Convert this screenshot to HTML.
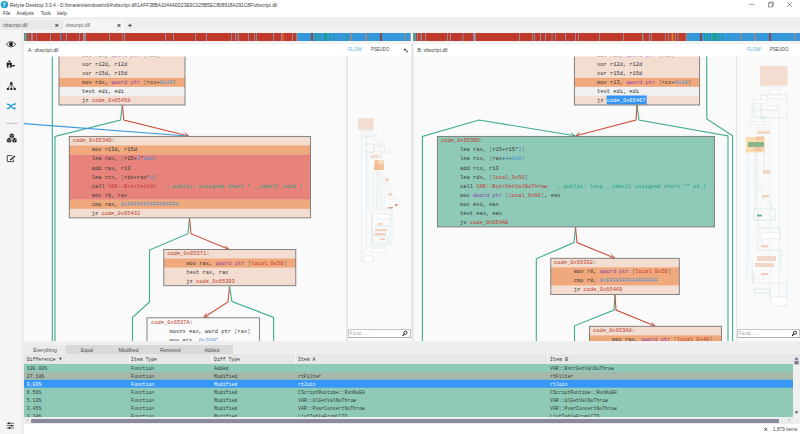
<!DOCTYPE html>
<html><head><meta charset="utf-8">
<style>
*{margin:0;padding:0;box-sizing:border-box}
html,body{width:800px;height:434px;overflow:hidden;background:#f0f0f0;font-family:'Liberation Sans', sans-serif}
.abs{position:absolute}
</style></head><body>
<div class="abs" style="left:0;top:0;width:800px;height:16.8px;background:#fff"></div>
<div class="abs" style="left:0;top:16.8px;width:800px;height:14.2px;background:#efefef"></div>
<div class="abs" style="left:0;top:20px;width:62.5px;height:9.8px;background:#e9e9e9"></div>
<div class="abs" style="left:63.3px;top:20px;width:62px;height:9.8px;background:#f4f4f4"></div>
<div class="abs" style="left:0;top:29.8px;width:800px;height:1.5px;background:#f4f4f4"></div>
<div class="abs" style="left:0;top:31.3px;width:23.8px;height:403px;background:linear-gradient(to right,#f5f5f5 0,#f5f5f5 19.5px,#ececec 22.8px,#e9e9e9 23.8px)"></div>
<div class="abs" style="left:23.5px;top:31.3px;width:776.5px;height:12.5px;background:#f3f3f3"></div>
<!-- panels -->
<div class="abs" style="left:24px;top:43.9px;width:387px;height:11.9px;background:#fff"></div>
<div class="abs" style="left:413.5px;top:43.9px;width:386.5px;height:11.9px;background:#fff"></div>
<div class="abs" style="left:24px;top:55.8px;width:387px;height:285.2px;background:#fafafa"></div>
<div class="abs" style="left:413.5px;top:55.8px;width:386.5px;height:285.2px;background:#fafafa"></div>
<div class="abs" style="left:346.2px;top:55.5px;width:1.8px;height:285.5px;background:#e6e6e6"></div>
<div class="abs" style="left:735.6px;top:55.5px;width:1.8px;height:285.5px;background:#e6e6e6"></div>
<div class="abs" style="left:411px;top:43.9px;width:2.5px;height:297px;background:#ececec"></div>
<div class="abs" style="left:411.6px;top:43.9px;width:1.2px;height:297px;background:#e4e4e4"></div>
<svg width="800" height="434" style="position:absolute;left:0;top:0"><defs><clipPath id="cma"><rect x="348.5" y="55" width="62.5" height="286"/></clipPath><clipPath id="cmb"><rect x="737.5" y="55" width="62.5" height="286"/></clipPath></defs><g clip-path="url(#cma)"><rect x="357.8" y="118.3" width="15.7" height="11.3" fill="#f2ddd0"/><polyline points="361.5,134 361.5,253 364,253" fill="none" stroke="#d0e4ee" stroke-width="0.45" stroke-linejoin="miter"/><polyline points="366.5,136 366.5,250" fill="none" stroke="#d0e4ee" stroke-width="0.45" stroke-linejoin="miter"/><polyline points="361.5,135 378,135 378,139" fill="none" stroke="#d0e4ee" stroke-width="0.45" stroke-linejoin="miter"/><polyline points="372,140 383,140 383,146" fill="none" stroke="#d0e4ee" stroke-width="0.45" stroke-linejoin="miter"/><polyline points="374,146 385,146 385,150" fill="none" stroke="#d0e4ee" stroke-width="0.45" stroke-linejoin="miter"/><polyline points="368,150 368,212" fill="none" stroke="#d0e4ee" stroke-width="0.45" stroke-linejoin="miter"/><polyline points="373,170 373,208 393,208" fill="none" stroke="#d0e4ee" stroke-width="0.45" stroke-linejoin="miter"/><polyline points="376.5,171 376.5,208" fill="none" stroke="#d0e4ee" stroke-width="0.45" stroke-linejoin="miter"/><polyline points="379,171 379,205" fill="none" stroke="#d0e4ee" stroke-width="0.45" stroke-linejoin="miter"/><polyline points="382,176 382,206" fill="none" stroke="#d0e4ee" stroke-width="0.45" stroke-linejoin="miter"/><polyline points="385,190 385,204" fill="none" stroke="#d0e4ee" stroke-width="0.45" stroke-linejoin="miter"/><polyline points="372,210 392,210 392,245 372,245 372,210" fill="none" stroke="#d0e4ee" stroke-width="0.45" stroke-linejoin="miter"/><polyline points="390,213 390,243" fill="none" stroke="#d0e4ee" stroke-width="0.45" stroke-linejoin="miter"/><polyline points="369,246 385,246 385,252" fill="none" stroke="#d0e4ee" stroke-width="0.45" stroke-linejoin="miter"/><polyline points="361,253 361,262 364,262" fill="none" stroke="#d0e4ee" stroke-width="0.45" stroke-linejoin="miter"/><polyline points="362,137 375,137" fill="none" stroke="#b9ddd3" stroke-width="0.45" stroke-linejoin="miter"/><polyline points="364,144 374,144 374,152 364,152" fill="none" stroke="#b9ddd3" stroke-width="0.45" stroke-linejoin="miter"/><polyline points="370,153 381,153 381,158 370,158" fill="none" stroke="#b9ddd3" stroke-width="0.45" stroke-linejoin="miter"/><polyline points="372,215 372,244" fill="none" stroke="#b9ddd3" stroke-width="0.45" stroke-linejoin="miter"/><polyline points="375,226 389,226" fill="none" stroke="#b9ddd3" stroke-width="0.45" stroke-linejoin="miter"/><polyline points="374,236 388,236 388,243 374,243" fill="none" stroke="#b9ddd3" stroke-width="0.45" stroke-linejoin="miter"/><rect x="361" y="130.5" width="5" height="1.8" fill="#ffffff" stroke="#dcdcdc" stroke-width="0.45"/><rect x="367" y="130.5" width="4" height="1.8" fill="#ffffff" stroke="#dcdcdc" stroke-width="0.45"/><rect x="376" y="143" width="5" height="2" fill="#ffffff" stroke="#dcdcdc" stroke-width="0.45"/><rect x="379" y="148" width="6" height="3" fill="#ffffff" stroke="#dcdcdc" stroke-width="0.45"/><rect x="385" y="150" width="5" height="3" fill="#ffffff" stroke="#dcdcdc" stroke-width="0.45"/><rect x="373" y="152" width="8" height="2.5" fill="#ffffff" stroke="#dcdcdc" stroke-width="0.45"/><rect x="376" y="172" width="6" height="2" fill="#ffffff" stroke="#dcdcdc" stroke-width="0.45"/><rect x="380" y="176" width="6" height="2" fill="#ffffff" stroke="#dcdcdc" stroke-width="0.45"/><rect x="384" y="183" width="5" height="2.5" fill="#ffffff" stroke="#dcdcdc" stroke-width="0.45"/><rect x="387" y="188" width="5" height="2" fill="#ffffff" stroke="#dcdcdc" stroke-width="0.45"/><rect x="389" y="197" width="6" height="2.5" fill="#ffffff" stroke="#dcdcdc" stroke-width="0.45"/><rect x="377" y="214" width="13" height="5" fill="#ffffff" stroke="#dcdcdc" stroke-width="0.45"/><rect x="373" y="248" width="8" height="4.5" fill="#ffffff" stroke="#dcdcdc" stroke-width="0.45"/><rect x="364" y="256" width="9" height="6" fill="#ffffff" stroke="#dcdcdc" stroke-width="0.45"/><rect x="374.5" y="160" width="9.5" height="10" fill="#f5c29e"/><rect x="378" y="160" width="6" height="4" fill="#f8dcb8"/><rect x="374.5" y="166" width="4" height="4" fill="#f0b48a"/><rect x="370.5" y="155.5" width="8" height="2" fill="#f2d6c4"/><rect x="385" y="178" width="4" height="3" fill="#f2d3c0"/><rect x="388" y="193" width="4" height="2.5" fill="#f2d3c0"/><rect x="395" y="204" width="2.5" height="2" fill="#e88a7a"/><rect x="388" y="207" width="5" height="1.5" fill="#e8a090"/><rect x="378" y="223" width="5" height="2" fill="#f2d3c0"/><rect x="375" y="229" width="12" height="2.2" fill="#f2d3c0"/><rect x="374" y="233" width="12" height="2.2" fill="#f2d3c0"/><rect x="380" y="238" width="5" height="2" fill="#f2d3c0"/><rect x="378" y="205" width="4" height="3" fill="#ffffff" stroke="#dcdcdc" stroke-width="0.45"/></g><g clip-path="url(#cmb)"><rect x="759.9" y="66" width="27.7" height="19.7" fill="#f2ddd0"/><polyline points="779,89 779,300" fill="none" stroke="#d0e4ee" stroke-width="0.45" stroke-linejoin="miter"/><polyline points="787.5,95 787.5,297" fill="none" stroke="#d0e4ee" stroke-width="0.45" stroke-linejoin="miter"/><polyline points="770,89 770,95" fill="none" stroke="#d0e4ee" stroke-width="0.45" stroke-linejoin="miter"/><polyline points="746.5,137 746.5,278 757,278" fill="none" stroke="#d0e4ee" stroke-width="0.45" stroke-linejoin="miter"/><polyline points="749,152 749,272" fill="none" stroke="#d0e4ee" stroke-width="0.45" stroke-linejoin="miter"/><polyline points="752,100 752,125" fill="none" stroke="#d0e4ee" stroke-width="0.45" stroke-linejoin="miter"/><polyline points="755,152 755,210" fill="none" stroke="#d0e4ee" stroke-width="0.45" stroke-linejoin="miter"/><polyline points="758,210 758,250" fill="none" stroke="#d0e4ee" stroke-width="0.45" stroke-linejoin="miter"/><polyline points="770,120 770,300" fill="none" stroke="#d0e4ee" stroke-width="0.45" stroke-linejoin="miter"/><polyline points="752,260 752,283 786,283 786,297" fill="none" stroke="#d0e4ee" stroke-width="0.45" stroke-linejoin="miter"/><polyline points="763,115 763,137" fill="none" stroke="#d0e4ee" stroke-width="0.45" stroke-linejoin="miter"/><polyline points="761,95 787,95" fill="none" stroke="#b9ddd3" stroke-width="0.45" stroke-linejoin="miter"/><polyline points="761,95 761,118 787,118" fill="none" stroke="#b9ddd3" stroke-width="0.45" stroke-linejoin="miter"/><polyline points="754,103 754,117 767,117" fill="none" stroke="#b9ddd3" stroke-width="0.45" stroke-linejoin="miter"/><polyline points="756,110 777,110" fill="none" stroke="#b9ddd3" stroke-width="0.45" stroke-linejoin="miter"/><polyline points="754,209 775,209 775,220 754,220 754,209" fill="none" stroke="#b9ddd3" stroke-width="0.45" stroke-linejoin="miter"/><polyline points="758,228 780,228 780,240" fill="none" stroke="#b9ddd3" stroke-width="0.45" stroke-linejoin="miter"/><polyline points="756,250 781,250 781,270" fill="none" stroke="#b9ddd3" stroke-width="0.45" stroke-linejoin="miter"/><polyline points="753,270 753,283" fill="none" stroke="#b9ddd3" stroke-width="0.45" stroke-linejoin="miter"/><polyline points="754,289 770,289 770,293 754,293 754,289" fill="none" stroke="#b9ddd3" stroke-width="0.45" stroke-linejoin="miter"/><polyline points="762,198 772,204 772,209" fill="none" stroke="#b9ddd3" stroke-width="0.45" stroke-linejoin="miter"/><polyline points="757,150 757,205" fill="none" stroke="#b9ddd3" stroke-width="0.45" stroke-linejoin="miter"/><polyline points="764,152 764,170" fill="none" stroke="#b9ddd3" stroke-width="0.45" stroke-linejoin="miter"/><rect x="766" y="87" width="8" height="2.5" fill="#ffffff" stroke="#dcdcdc" stroke-width="0.45"/><rect x="776" y="87" width="4" height="2.5" fill="#ffffff" stroke="#dcdcdc" stroke-width="0.45"/><rect x="767.5" y="95" width="20" height="3.5" fill="#ffffff" stroke="#dcdcdc" stroke-width="0.45"/><rect x="754" y="100" width="13" height="3.5" fill="#ffffff" stroke="#dcdcdc" stroke-width="0.45"/><rect x="768" y="106" width="9" height="4" fill="#ffffff" stroke="#dcdcdc" stroke-width="0.45"/><rect x="748" y="122" width="18" height="2.5" fill="#ffffff" stroke="#dcdcdc" stroke-width="0.45"/><rect x="758" y="127.5" width="8" height="2" fill="#ffffff" stroke="#dcdcdc" stroke-width="0.45"/><rect x="751" y="160" width="7" height="2" fill="#ffffff" stroke="#dcdcdc" stroke-width="0.45"/><rect x="756" y="166" width="6" height="2" fill="#ffffff" stroke="#dcdcdc" stroke-width="0.45"/><rect x="753" y="178" width="6" height="2" fill="#ffffff" stroke="#dcdcdc" stroke-width="0.45"/><rect x="757" y="186" width="7" height="2" fill="#ffffff" stroke="#dcdcdc" stroke-width="0.45"/><rect x="761" y="233" width="19" height="5.5" fill="#ffffff" stroke="#dcdcdc" stroke-width="0.45"/><rect x="757" y="240" width="5" height="2" fill="#ffffff" stroke="#dcdcdc" stroke-width="0.45"/><rect x="754" y="276" width="10" height="3" fill="#ffffff" stroke="#dcdcdc" stroke-width="0.45"/><rect x="771" y="297" width="16" height="9" fill="#ffffff" stroke="#dcdcdc" stroke-width="0.45"/><rect x="757" y="131" width="13" height="3" fill="#f2d6c6"/><rect x="746" y="137" width="18.7" height="15.5" fill="#f8dcb2"/><rect x="756" y="136.5" width="8" height="3.5" fill="#f3c6a4"/><rect x="748" y="142" width="16" height="5" fill="#8db58a"/><rect x="754" y="147.5" width="8" height="3.5" fill="#f3c6a4"/><rect x="763" y="170" width="7" height="4" fill="#f2d6c6"/><rect x="762" y="195" width="7" height="2.5" fill="#f2d0bc"/><rect x="757" y="214.5" width="5" height="2" fill="#5fb896"/><rect x="761" y="245" width="7" height="2.5" fill="#f2d0bc"/><rect x="757" y="256" width="19" height="5" fill="#f2d6c6"/><rect x="755" y="263" width="19" height="4" fill="#f2d6c6"/><rect x="761" y="273" width="7" height="2" fill="#f2c8b4"/></g></svg>

<svg width="800" height="434" style="position:absolute;left:0;top:0" font-family="'Liberation Mono', monospace" font-size="5.4">
<defs>
<clipPath id="ca"><rect x="24" y="56.4" width="322.5" height="284.6"/></clipPath>
<clipPath id="cb"><rect x="413.5" y="56.4" width="322" height="284.6"/></clipPath>
</defs>
<g clip-path="url(#ca)"><polyline points="52.3,55 52.3,341" fill="none" stroke="#3fab8f" stroke-width="1.1" stroke-linejoin="miter"/><polyline points="122.4,105 120.5,120 55,136.4 55,341" fill="none" stroke="#3fab8f" stroke-width="1.1" stroke-linejoin="miter"/><polyline points="122.4,105 123.8,120 188.5,136" fill="none" stroke="#c9503f" stroke-width="1.1" stroke-linejoin="miter"/><polyline points="183.60,137.06 188.5,136 184.66,132.78" fill="none" stroke="#c9503f" stroke-width="1"/><polyline points="24,123.6 187,136" fill="none" stroke="#3a9ad9" stroke-width="1.1" stroke-linejoin="miter"/><polyline points="189.5,218 188,233.7 149.5,250 149.5,302 132.5,317.5 132.5,341" fill="none" stroke="#3fab8f" stroke-width="1.1" stroke-linejoin="miter"/><polyline points="189.5,218 191,233.7 228.7,249.3" fill="none" stroke="#c9503f" stroke-width="1.1" stroke-linejoin="miter"/><polyline points="223.70,249.61 228.7,249.3 225.38,245.55" fill="none" stroke="#c9503f" stroke-width="1"/><polyline points="229.5,286 228,302 203.8,317.5" fill="none" stroke="#c9503f" stroke-width="1.1" stroke-linejoin="miter"/><polyline points="206.40,313.22 203.8,317.5 208.78,316.93" fill="none" stroke="#c9503f" stroke-width="1"/><polyline points="229.5,286 232,301.5 273.6,317.4 273.6,341" fill="none" stroke="#3fab8f" stroke-width="1.1" stroke-linejoin="miter"/><rect x="59" y="50.699999999999996" width="126" height="54.300000000000004" fill="#f2ddd0"/>
<rect x="59" y="77.85" width="126" height="9.05" fill="#f0a97c"/>
<rect x="59" y="86.90" width="126" height="9.05" fill="#f0f0f0"/>
<text x="82" y="56.65" xml:space="preserve"><tspan fill="#363636">mov rax, </tspan><tspan fill="#8e44ad">qword ptr</tspan><tspan fill="#363636"> </tspan><tspan fill="#7a7a7a">[</tspan><tspan fill="#363636">rax</tspan><tspan fill="#7a7a7a">]</tspan></text>
<text x="82" y="65.70" xml:space="preserve"><tspan fill="#363636">xor r12d, r12d</tspan></text>
<text x="82" y="74.75" xml:space="preserve"><tspan fill="#363636">xor r15d, r15d</tspan></text>
<text x="82" y="83.80" xml:space="preserve"><tspan fill="#363636">mov rdx, </tspan><tspan fill="#8e44ad">qword ptr</tspan><tspan fill="#363636"> </tspan><tspan fill="#7a7a7a">[</tspan><tspan fill="#363636">rcx+</tspan><tspan fill="#3d8fd6">0x10</tspan><tspan fill="#7a7a7a">]</tspan></text>
<text x="82" y="92.85" xml:space="preserve"><tspan fill="#363636">test edi, edi</tspan></text>
<text x="82" y="101.90" xml:space="preserve"><tspan fill="#363636">jz </tspan><tspan fill="#c0392b">code_0x65458</tspan></text>
<rect x="59" y="50.699999999999996" width="126" height="54.300000000000004" fill="none" stroke="#777777" stroke-width="0.9"/><rect x="69.3" y="136.4" width="241.2" height="81.45" fill="#f2ddd0"/>
<rect x="69.3" y="145.45" width="241.2" height="9.05" fill="#f0a97c"/>
<rect x="69.3" y="154.50" width="241.2" height="45.25" fill="#e8837c"/>
<rect x="69.3" y="199.75" width="241.2" height="9.05" fill="#f0a97c"/>
<text x="72.8" y="142.35" xml:space="preserve"><tspan fill="#c0392b">code_0x6534D</tspan><tspan fill="#363636">:</tspan></text>
<text x="91.69999999999999" y="151.40" xml:space="preserve"><tspan fill="#363636">mov r13d, r15d</tspan></text>
<text x="91.69999999999999" y="160.45" xml:space="preserve"><tspan fill="#363636">lea rax, </tspan><tspan fill="#7a7a7a">[</tspan><tspan fill="#363636">r15+</tspan><tspan fill="#3d8fd6">2</tspan><tspan fill="#363636">*</tspan><tspan fill="#3d8fd6">0x8</tspan><tspan fill="#7a7a7a">]</tspan></text>
<text x="91.69999999999999" y="169.50" xml:space="preserve"><tspan fill="#363636">add rax, r13</tspan></text>
<text x="91.69999999999999" y="178.55" xml:space="preserve"><tspan fill="#363636">lea rcx, </tspan><tspan fill="#7a7a7a">[</tspan><tspan fill="#363636">rdx+rax*</tspan><tspan fill="#3d8fd6">8</tspan><tspan fill="#7a7a7a">]</tspan></text>
<text x="91.69999999999999" y="187.60" xml:space="preserve"><tspan fill="#363636">call </tspan><tspan fill="#c0392b">VAR::BstrGetVal</tspan><tspan fill="#363636">   </tspan><tspan fill="#16a085">; public: unsigned short * __cdecl( void )</tspan></text>
<text x="91.69999999999999" y="196.65" xml:space="preserve"><tspan fill="#363636">mov r8, rax</tspan></text>
<text x="91.69999999999999" y="205.70" xml:space="preserve"><tspan fill="#363636">cmp rax, </tspan><tspan fill="#3d8fd6">0xFFFFFFFFFFFFFFFF</tspan></text>
<text x="91.69999999999999" y="214.75" xml:space="preserve"><tspan fill="#363636">jz </tspan><tspan fill="#c0392b">code_0x65432</tspan></text>
<rect x="69.3" y="136.4" width="241.2" height="81.45" fill="none" stroke="#777777" stroke-width="0.9"/><rect x="163.8" y="249.5" width="132" height="36.2" fill="#f2ddd0"/>
<rect x="163.8" y="258.55" width="132" height="9.05" fill="#f0a97c"/>
<text x="167.3" y="255.45" xml:space="preserve"><tspan fill="#c0392b">code_0x65371</tspan><tspan fill="#363636">:</tspan></text>
<text x="186.3" y="264.50" xml:space="preserve"><tspan fill="#363636">mov rax, </tspan><tspan fill="#8e44ad">qword ptr</tspan><tspan fill="#363636"> </tspan><tspan fill="#7a7a7a">[</tspan><tspan fill="#c0392b">local_0x50</tspan><tspan fill="#7a7a7a">]</tspan></text>
<text x="186.3" y="273.55" xml:space="preserve"><tspan fill="#363636">test rax, rax</tspan></text>
<text x="186.3" y="282.60" xml:space="preserve"><tspan fill="#363636">jz </tspan><tspan fill="#c0392b">code_0x65393</tspan></text>
<rect x="163.8" y="249.5" width="132" height="36.2" fill="none" stroke="#777777" stroke-width="0.9"/><rect x="147" y="317.8" width="112.4" height="36.2" fill="#fafafa"/>
<text x="151" y="323.75" xml:space="preserve"><tspan fill="#c0392b">code_0x6537A</tspan><tspan fill="#363636">:</tspan></text>
<text x="169.5" y="332.80" xml:space="preserve"><tspan fill="#363636">movzx eax, word ptr </tspan><tspan fill="#7a7a7a">[</tspan><tspan fill="#363636">rax</tspan><tspan fill="#7a7a7a">]</tspan></text>
<text x="169.5" y="341.85" xml:space="preserve"><tspan fill="#363636">mov ecx, </tspan><tspan fill="#3d8fd6">0x200C</tspan></text>
<text x="169.5" y="350.90" xml:space="preserve"></text>
<rect x="147" y="317.8" width="112.4" height="36.2" fill="none" stroke="#777777" stroke-width="0.9"/></g>
<g clip-path="url(#cb)"><polyline points="706.8,55 706.8,119 732.6,135.7 732.6,341" fill="none" stroke="#3fab8f" stroke-width="1.1" stroke-linejoin="miter"/><polyline points="637,105 639,120 728,136 728,341" fill="none" stroke="#3fab8f" stroke-width="1.1" stroke-linejoin="miter"/><polyline points="637,105 636,120 575.8,135.8" fill="none" stroke="#c9503f" stroke-width="1.1" stroke-linejoin="miter"/><polyline points="579.59,132.53 575.8,135.8 580.71,136.79" fill="none" stroke="#c9503f" stroke-width="1"/><polyline points="422.4,341 422.4,136.4 479,120 575.1,135.8" fill="none" stroke="#3fab8f" stroke-width="1.1" stroke-linejoin="miter"/><polyline points="570.30,137.24 575.1,135.8 571.02,132.90" fill="none" stroke="#3fab8f" stroke-width="1"/><polyline points="575.5,227 574,242.5 536.3,258.8 536.3,341" fill="none" stroke="#3fab8f" stroke-width="1.1" stroke-linejoin="miter"/><polyline points="575.5,227 577,242.5 614.5,258" fill="none" stroke="#c9503f" stroke-width="1.1" stroke-linejoin="miter"/><polyline points="609.50,258.31 614.5,258 611.18,254.25" fill="none" stroke="#c9503f" stroke-width="1"/><polyline points="615,294.5 614,310 574.5,325.8 574.5,341" fill="none" stroke="#3fab8f" stroke-width="1.1" stroke-linejoin="miter"/><polyline points="615,294.5 616,310 655,326" fill="none" stroke="#c9503f" stroke-width="1.1" stroke-linejoin="miter"/><polyline points="650.00,326.33 655,326 651.67,322.26" fill="none" stroke="#c9503f" stroke-width="1"/><rect x="574.4" y="50.699999999999996" width="125.2" height="54.300000000000004" fill="#f2ddd0"/>
<rect x="574.4" y="77.85" width="125.2" height="9.05" fill="#f0a97c"/>
<rect x="574.4" y="86.90" width="125.2" height="9.05" fill="#f0f0f0"/>
<text x="597.0" y="56.65" xml:space="preserve"><tspan fill="#363636">mov rax, </tspan><tspan fill="#8e44ad">qword ptr</tspan><tspan fill="#363636"> </tspan><tspan fill="#7a7a7a">[</tspan><tspan fill="#363636">rax</tspan><tspan fill="#7a7a7a">]</tspan></text>
<text x="597.0" y="65.70" xml:space="preserve"><tspan fill="#363636">xor r12d, r12d</tspan></text>
<text x="597.0" y="74.75" xml:space="preserve"><tspan fill="#363636">xor r15d, r15d</tspan></text>
<text x="597.0" y="83.80" xml:space="preserve"><tspan fill="#363636">mov r13, </tspan><tspan fill="#8e44ad">qword ptr</tspan><tspan fill="#363636"> </tspan><tspan fill="#7a7a7a">[</tspan><tspan fill="#363636">rcx+</tspan><tspan fill="#3d8fd6">0x10</tspan><tspan fill="#7a7a7a">]</tspan></text>
<text x="597.0" y="92.85" xml:space="preserve"><tspan fill="#363636">test edi, edi</tspan></text>
<rect x="606.6" y="95.5" width="40" height="9" fill="#3393f3"/><text x="597.0" y="102.25" xml:space="preserve"><tspan fill="#363636">jz </tspan><tspan fill="#ffffff">code_0x65467</tspan></text>
<rect x="574.4" y="50.699999999999996" width="125.2" height="54.300000000000004" fill="none" stroke="#777777" stroke-width="0.9"/><rect x="437.4" y="136.4" width="277" height="90.5" fill="#8fcab9"/>
<text x="441.0" y="142.35" xml:space="preserve"><tspan fill="#c0392b">code_0x6536D</tspan><tspan fill="#363636">:</tspan></text>
<text x="460.0" y="151.40" xml:space="preserve"><tspan fill="#363636">lea rax, </tspan><tspan fill="#7a7a7a">[</tspan><tspan fill="#363636">r15+r15*</tspan><tspan fill="#3d8fd6">2</tspan><tspan fill="#7a7a7a">]</tspan></text>
<text x="460.0" y="160.45" xml:space="preserve"><tspan fill="#363636">lea rcx, </tspan><tspan fill="#7a7a7a">[</tspan><tspan fill="#363636">rax+</tspan><tspan fill="#3d8fd6">8</tspan><tspan fill="#363636">+</tspan><tspan fill="#3d8fd6">0x8</tspan><tspan fill="#7a7a7a">]</tspan></text>
<text x="460.0" y="169.50" xml:space="preserve"><tspan fill="#363636">add rcx, r13</tspan></text>
<text x="460.0" y="178.55" xml:space="preserve"><tspan fill="#363636">lea rdx, </tspan><tspan fill="#7a7a7a">[</tspan><tspan fill="#c0392b">local_0x50</tspan><tspan fill="#7a7a7a">]</tspan></text>
<text x="460.0" y="187.60" xml:space="preserve"><tspan fill="#363636">call </tspan><tspan fill="#c0392b">VAR::BstrGetValNoThrow</tspan><tspan fill="#363636">   </tspan><tspan fill="#16a085">; public: long __cdecl( unsigned short ** p1 )</tspan></text>
<text x="460.0" y="196.65" xml:space="preserve"><tspan fill="#363636">mov </tspan><tspan fill="#8e44ad">dword ptr</tspan><tspan fill="#363636"> </tspan><tspan fill="#7a7a7a">[</tspan><tspan fill="#c0392b">local_0x60</tspan><tspan fill="#7a7a7a">]</tspan><tspan fill="#363636">, eax</tspan></text>
<text x="460.0" y="205.70" xml:space="preserve"><tspan fill="#363636">mov esi, eax</tspan></text>
<text x="460.0" y="214.75" xml:space="preserve"><tspan fill="#363636">test eax, eax</tspan></text>
<text x="460.0" y="223.80" xml:space="preserve"><tspan fill="#363636">js </tspan><tspan fill="#c0392b">code_0x654AE</tspan></text>
<rect x="437.4" y="136.4" width="277" height="90.5" fill="none" stroke="#777777" stroke-width="0.9"/><rect x="550.8" y="258.3" width="128.5" height="36.2" fill="#f2ddd0"/>
<rect x="550.8" y="267.35" width="128.5" height="18.10" fill="#f0a97c"/>
<text x="554.0999999999999" y="264.25" xml:space="preserve"><tspan fill="#c0392b">code_0x65392</tspan><tspan fill="#363636">:</tspan></text>
<text x="573.8" y="273.30" xml:space="preserve"><tspan fill="#363636">mov r8, </tspan><tspan fill="#8e44ad">qword ptr</tspan><tspan fill="#363636"> </tspan><tspan fill="#7a7a7a">[</tspan><tspan fill="#c0392b">local_0x50</tspan><tspan fill="#7a7a7a">]</tspan></text>
<text x="573.8" y="282.35" xml:space="preserve"><tspan fill="#363636">cmp r8, </tspan><tspan fill="#3d8fd6">0xFFFFFFFFFFFFFFFF</tspan></text>
<text x="573.8" y="291.40" xml:space="preserve"><tspan fill="#363636">jz </tspan><tspan fill="#c0392b">code_0x654A9</tspan></text>
<rect x="550.8" y="258.3" width="128.5" height="36.2" fill="none" stroke="#777777" stroke-width="0.9"/><rect x="589.5" y="326.3" width="132" height="27.150000000000002" fill="#f2ddd0"/>
<rect x="589.5" y="335.35" width="132" height="9.05" fill="#f0a97c"/>
<text x="593.0" y="332.25" xml:space="preserve"><tspan fill="#c0392b">code_0x653A0</tspan><tspan fill="#363636">:</tspan></text>
<text x="612.1" y="341.30" xml:space="preserve"><tspan fill="#363636">mov rax, </tspan><tspan fill="#8e44ad">qword ptr</tspan><tspan fill="#363636"> </tspan><tspan fill="#7a7a7a">[</tspan><tspan fill="#c0392b">local_0x48</tspan><tspan fill="#7a7a7a">]</tspan></text>
<text x="612.1" y="350.35" xml:space="preserve"></text>
<rect x="589.5" y="326.3" width="132" height="27.150000000000002" fill="none" stroke="#777777" stroke-width="0.9"/></g>
<rect x="24" y="33" width="274" height="8" fill="#c0392b"/>
<rect x="298" y="33" width="112.5" height="8" fill="#3498db"/>
<rect x="24" y="33" width="3" height="8" fill="#5e9b8e"/>
<rect x="28" y="33" width="0.5" height="8" fill="#8f8a8f"/>
<rect x="31" y="33" width="2" height="8" fill="#9a87a0"/>
<rect x="36" y="33" width="0.7" height="8" fill="#9a87a0"/>
<rect x="50" y="33" width="1" height="8" fill="#8f8a8f"/>
<rect x="60" y="33" width="1.2" height="8" fill="#3a8fd0"/>
<rect x="66" y="33" width="1" height="8" fill="#9a87a0"/>
<rect x="79" y="33" width="1" height="8" fill="#8f8a8f"/>
<rect x="83" y="33" width="3" height="8" fill="#9a87a0"/>
<rect x="109" y="33" width="1" height="8" fill="#8f8a8f"/>
<rect x="122.3" y="33" width="0.7" height="8" fill="#8f8a8f"/>
<rect x="124" y="33" width="1" height="8" fill="#8f8a8f"/>
<rect x="165" y="33" width="1" height="8" fill="#9a87a0"/>
<rect x="173" y="33" width="1" height="8" fill="#8f8a8f"/>
<rect x="195" y="33" width="1" height="8" fill="#8f8a8f"/>
<rect x="206" y="33" width="1" height="8" fill="#9a87a0"/>
<rect x="231" y="33" width="1" height="8" fill="#8f8a8f"/>
<rect x="235" y="33" width="1" height="8" fill="#9a87a0"/>
<rect x="237.5" y="33" width="1.5" height="8" fill="#8f8a8f"/>
<rect x="248" y="33" width="1" height="8" fill="#8f8a8f"/>
<rect x="254" y="33" width="1" height="8" fill="#9a87a0"/>
<rect x="256" y="33" width="1" height="8" fill="#8f8a8f"/>
<rect x="273" y="33" width="1" height="8" fill="#8f8a8f"/>
<rect x="281" y="33" width="1" height="8" fill="#9a87a0"/>
<rect x="282.5" y="33" width="1.0" height="8" fill="#e67e22"/>
<rect x="292" y="33" width="1" height="8" fill="#8f8a8f"/>
<rect x="296" y="33" width="2" height="8" fill="#8f8a8f"/>
<rect x="311" y="33" width="2" height="8" fill="#8a4a4a"/>
<rect x="315" y="33" width="1" height="8" fill="#1aa08a"/>
<rect x="318.5" y="33" width="1.0" height="8" fill="#1aa08a"/>
<rect x="324" y="33" width="3" height="8" fill="#1aa08a"/>
<rect x="329.5" y="33" width="0.8" height="8" fill="#1aa08a"/>
<rect x="333.5" y="33" width="0.8" height="8" fill="#1aa08a"/>
<rect x="346" y="33" width="1" height="8" fill="#1aa08a"/>
<rect x="350" y="33" width="2" height="8" fill="#8f8a8f"/>
<rect x="365" y="33" width="2" height="8" fill="#8f8a8f"/>
<rect x="380" y="33" width="2" height="8" fill="#8a4a4a"/>
<rect x="404" y="33" width="1.5" height="8" fill="#8f8a8f"/>
<rect x="410" y="33" width="0.5" height="8" fill="#8f8a8f"/>
<rect x="413" y="33" width="274" height="8" fill="#c0392b"/>
<rect x="687" y="33" width="113" height="8" fill="#3498db"/>
<rect x="413" y="33" width="3" height="8" fill="#5e9b8e"/>
<rect x="417" y="33" width="1" height="8" fill="#8f8a8f"/>
<rect x="420.5" y="33" width="1.5" height="8" fill="#9a87a0"/>
<rect x="425" y="33" width="1" height="8" fill="#8f8a8f"/>
<rect x="447" y="33" width="1" height="8" fill="#8f8a8f"/>
<rect x="450" y="33" width="1" height="8" fill="#9a87a0"/>
<rect x="462.5" y="33" width="1.0" height="8" fill="#8f8a8f"/>
<rect x="473" y="33" width="3" height="8" fill="#9a87a0"/>
<rect x="519" y="33" width="1" height="8" fill="#8f8a8f"/>
<rect x="532" y="33" width="1" height="8" fill="#8f8a8f"/>
<rect x="534" y="33" width="1" height="8" fill="#8f8a8f"/>
<rect x="540" y="33" width="1" height="8" fill="#9a87a0"/>
<rect x="545" y="33" width="1" height="8" fill="#8f8a8f"/>
<rect x="551.5" y="33" width="1.0" height="8" fill="#8f8a8f"/>
<rect x="555" y="33" width="1" height="8" fill="#8f8a8f"/>
<rect x="565" y="33" width="1" height="8" fill="#8f8a8f"/>
<rect x="575" y="33" width="1" height="8" fill="#9a87a0"/>
<rect x="578" y="33" width="1" height="8" fill="#8f8a8f"/>
<rect x="599" y="33" width="1" height="8" fill="#8f8a8f"/>
<rect x="623" y="33" width="1" height="8" fill="#8f8a8f"/>
<rect x="642" y="33" width="1.5" height="8" fill="#8f8a8f"/>
<rect x="649" y="33" width="1" height="8" fill="#9a87a0"/>
<rect x="651" y="33" width="1" height="8" fill="#8f8a8f"/>
<rect x="665" y="33" width="1" height="8" fill="#8f8a8f"/>
<rect x="668" y="33" width="1" height="8" fill="#8f8a8f"/>
<rect x="671.5" y="33" width="2.0" height="8" fill="#e67e22"/>
<rect x="675" y="33" width="1" height="8" fill="#8f8a8f"/>
<rect x="677.5" y="33" width="1.0" height="8" fill="#8f8a8f"/>
<rect x="685.5" y="33" width="1.5" height="8" fill="#8f8a8f"/>
<rect x="700" y="33" width="2" height="8" fill="#8a4a4a"/>
<rect x="704" y="33" width="1" height="8" fill="#1aa08a"/>
<rect x="707" y="33" width="1" height="8" fill="#1aa08a"/>
<rect x="709.5" y="33" width="1.0" height="8" fill="#1aa08a"/>
<rect x="712.5" y="33" width="4.5" height="8" fill="#1aa08a"/>
<rect x="718.5" y="33" width="1.0" height="8" fill="#1aa08a"/>
<rect x="722" y="33" width="1" height="8" fill="#1aa08a"/>
<rect x="740" y="33" width="1.5" height="8" fill="#8f8a8f"/>
<rect x="754" y="33" width="2" height="8" fill="#8f8a8f"/>
<rect x="769" y="33" width="2" height="8" fill="#8a4a4a"/>
<rect x="794" y="33" width="1.5" height="8" fill="#8f8a8f"/>
</svg>
<!-- find boxes -->
<div class="abs" style="left:348.3px;top:329.2px;width:62.5px;height:9.1px;background:#fff;border:0.7px solid #c4c4c4;border-bottom:1px solid #b0b0b0"></div>
<div class="abs" style="left:737.3px;top:329px;width:62.7px;height:9.1px;background:#fff;border:0.7px solid #c4c4c4;border-bottom:1px solid #b0b0b0"></div>
<!-- bottom table backgrounds -->
<div class="abs" style="left:24px;top:341px;width:776px;height:83px;background:#efefef"></div>
<div class="abs" style="left:24.5px;top:345.2px;width:41.2px;height:9px;background:#e9e9e9"></div>
<div class="abs" style="left:65.7px;top:345.2px;width:167.3px;height:9px;background:#d9d9d9"></div>
<div class="abs" style="left:24px;top:354.2px;width:776px;height:9.8px;background:#e7e7e7"></div>
<div class="abs" style="left:128.7px;top:354.2px;width:0.6px;height:9.8px;background:#f6f6f6"></div>
<div class="abs" style="left:211px;top:354.2px;width:0.6px;height:9.8px;background:#f6f6f6"></div>
<div class="abs" style="left:295px;top:354.2px;width:0.6px;height:9.8px;background:#f6f6f6"></div>
<div class="abs" style="left:547.4px;top:354.2px;width:0.6px;height:9.8px;background:#f6f6f6"></div>
<div class="abs" style="left:793px;top:364px;width:7px;height:53px;background:#f0f0f0"></div>
<div class="abs" style="left:24px;top:417px;width:769px;height:7px;background:#ececec"></div>
<div class="abs" style="left:31px;top:418.7px;width:747.8px;height:4.2px;background:#8a8a9c"></div>
<div class="abs" style="left:24px;top:424px;width:776px;height:10px;background:#fff"></div>
<svg width="800" height="434" style="position:absolute;left:0;top:0"><defs><clipPath id="ct"><rect x="24" y="364" width="769" height="53"/></clipPath></defs><g clip-path="url(#ct)"><rect x="24" y="364" width="769" height="53" fill="#8fcab9"/><text x="26.8" y="370.2" font-family="'Liberation Mono', monospace" font-size="4.85" fill="#2f3a36" textLength="20.30" lengthAdjust="spacingAndGlyphs" xml:space="preserve">100.00%</text><text x="131" y="370.2" font-family="'Liberation Mono', monospace" font-size="4.85" fill="#2f3a36" textLength="23.20" lengthAdjust="spacingAndGlyphs" xml:space="preserve">Function</text><text x="214" y="370.2" font-family="'Liberation Mono', monospace" font-size="4.85" fill="#2f3a36" textLength="14.50" lengthAdjust="spacingAndGlyphs" xml:space="preserve">Added</text><text x="550" y="370.2" font-family="'Liberation Mono', monospace" font-size="4.85" fill="#2f3a36" textLength="63.80" lengthAdjust="spacingAndGlyphs" xml:space="preserve">VAR::BstrGetValNoThrow</text><rect x="24" y="371.90" width="769" height="7.90" fill="#a5b8aa"/><text x="26.8" y="378.1" font-family="'Liberation Mono', monospace" font-size="4.85" fill="#2f3a36" textLength="17.40" lengthAdjust="spacingAndGlyphs" xml:space="preserve">27.18%</text><text x="131" y="378.1" font-family="'Liberation Mono', monospace" font-size="4.85" fill="#2f3a36" textLength="23.20" lengthAdjust="spacingAndGlyphs" xml:space="preserve">Function</text><text x="214" y="378.1" font-family="'Liberation Mono', monospace" font-size="4.85" fill="#2f3a36" textLength="23.20" lengthAdjust="spacingAndGlyphs" xml:space="preserve">Modified</text><text x="298" y="378.1" font-family="'Liberation Mono', monospace" font-size="4.85" fill="#2f3a36" textLength="23.20" lengthAdjust="spacingAndGlyphs" xml:space="preserve">rtFilter</text><text x="550" y="378.1" font-family="'Liberation Mono', monospace" font-size="4.85" fill="#2f3a36" textLength="23.20" lengthAdjust="spacingAndGlyphs" xml:space="preserve">rtFilter</text><rect x="24" y="379.80" width="769" height="7.90" fill="#3797f8"/><text x="26.8" y="386.0" font-family="'Liberation Mono', monospace" font-size="4.85" fill="#ffffff" textLength="14.50" lengthAdjust="spacingAndGlyphs" xml:space="preserve">9.03%</text><text x="131" y="386.0" font-family="'Liberation Mono', monospace" font-size="4.85" fill="#ffffff" textLength="23.20" lengthAdjust="spacingAndGlyphs" xml:space="preserve">Function</text><text x="214" y="386.0" font-family="'Liberation Mono', monospace" font-size="4.85" fill="#ffffff" textLength="23.20" lengthAdjust="spacingAndGlyphs" xml:space="preserve">Modified</text><text x="298" y="386.0" font-family="'Liberation Mono', monospace" font-size="4.85" fill="#ffffff" textLength="17.40" lengthAdjust="spacingAndGlyphs" xml:space="preserve">rtJoin</text><text x="550" y="386.0" font-family="'Liberation Mono', monospace" font-size="4.85" fill="#ffffff" textLength="17.40" lengthAdjust="spacingAndGlyphs" xml:space="preserve">rtJoin</text><text x="26.8" y="393.9" font-family="'Liberation Mono', monospace" font-size="4.85" fill="#2f3a36" textLength="14.50" lengthAdjust="spacingAndGlyphs" xml:space="preserve">6.56%</text><text x="131" y="393.9" font-family="'Liberation Mono', monospace" font-size="4.85" fill="#2f3a36" textLength="23.20" lengthAdjust="spacingAndGlyphs" xml:space="preserve">Function</text><text x="214" y="393.9" font-family="'Liberation Mono', monospace" font-size="4.85" fill="#2f3a36" textLength="23.20" lengthAdjust="spacingAndGlyphs" xml:space="preserve">Modified</text><text x="298" y="393.9" font-family="'Liberation Mono', monospace" font-size="4.85" fill="#2f3a36" textLength="66.70" lengthAdjust="spacingAndGlyphs" xml:space="preserve">CScriptRuntime::RunNoEH</text><text x="550" y="393.9" font-family="'Liberation Mono', monospace" font-size="4.85" fill="#2f3a36" textLength="66.70" lengthAdjust="spacingAndGlyphs" xml:space="preserve">CScriptRuntime::RunNoEH</text><text x="26.8" y="401.8" font-family="'Liberation Mono', monospace" font-size="4.85" fill="#2f3a36" textLength="14.50" lengthAdjust="spacingAndGlyphs" xml:space="preserve">5.13%</text><text x="131" y="401.8" font-family="'Liberation Mono', monospace" font-size="4.85" fill="#2f3a36" textLength="23.20" lengthAdjust="spacingAndGlyphs" xml:space="preserve">Function</text><text x="214" y="401.8" font-family="'Liberation Mono', monospace" font-size="4.85" fill="#2f3a36" textLength="23.20" lengthAdjust="spacingAndGlyphs" xml:space="preserve">Modified</text><text x="298" y="401.8" font-family="'Liberation Mono', monospace" font-size="4.85" fill="#2f3a36" textLength="58.00" lengthAdjust="spacingAndGlyphs" xml:space="preserve">VAR::UlGetValNoThrow</text><text x="550" y="401.8" font-family="'Liberation Mono', monospace" font-size="4.85" fill="#2f3a36" textLength="58.00" lengthAdjust="spacingAndGlyphs" xml:space="preserve">VAR::UlGetValNoThrow</text><text x="26.8" y="409.7" font-family="'Liberation Mono', monospace" font-size="4.85" fill="#2f3a36" textLength="14.50" lengthAdjust="spacingAndGlyphs" xml:space="preserve">3.45%</text><text x="131" y="409.7" font-family="'Liberation Mono', monospace" font-size="4.85" fill="#2f3a36" textLength="23.20" lengthAdjust="spacingAndGlyphs" xml:space="preserve">Function</text><text x="214" y="409.7" font-family="'Liberation Mono', monospace" font-size="4.85" fill="#2f3a36" textLength="23.20" lengthAdjust="spacingAndGlyphs" xml:space="preserve">Modified</text><text x="298" y="409.7" font-family="'Liberation Mono', monospace" font-size="4.85" fill="#2f3a36" textLength="66.70" lengthAdjust="spacingAndGlyphs" xml:space="preserve">VAR::PvarConvertNoThrow</text><text x="550" y="409.7" font-family="'Liberation Mono', monospace" font-size="4.85" fill="#2f3a36" textLength="66.70" lengthAdjust="spacingAndGlyphs" xml:space="preserve">VAR::PvarConvertNoThrow</text><text x="26.8" y="417.6" font-family="'Liberation Mono', monospace" font-size="4.85" fill="#2f3a36" textLength="14.50" lengthAdjust="spacingAndGlyphs" xml:space="preserve">0.24%</text><text x="131" y="417.6" font-family="'Liberation Mono', monospace" font-size="4.85" fill="#2f3a36" textLength="23.20" lengthAdjust="spacingAndGlyphs" xml:space="preserve">Function</text><text x="214" y="417.6" font-family="'Liberation Mono', monospace" font-size="4.85" fill="#2f3a36" textLength="23.20" lengthAdjust="spacingAndGlyphs" xml:space="preserve">Modified</text><text x="298" y="417.6" font-family="'Liberation Mono', monospace" font-size="4.85" fill="#2f3a36" textLength="49.30" lengthAdjust="spacingAndGlyphs" xml:space="preserve">ListTableFromLCID</text><text x="550" y="417.6" font-family="'Liberation Mono', monospace" font-size="4.85" fill="#2f3a36" textLength="49.30" lengthAdjust="spacingAndGlyphs" xml:space="preserve">ListTableFromLCID</text></g><text x="9.8" y="6.6" font-family="'Liberation Sans', sans-serif" font-size="5.4" fill="#3c3c3c" textLength="267.20" lengthAdjust="spacingAndGlyphs" xml:space="preserve">Relyze Desktop 3.0.4 - D:\binaries\windows\x64\vbscript.dll\1AFF38BA1044A0D23E9C025B5EC808918A291C8F\vbscript.dll</text><text x="3" y="15.4" font-family="'Liberation Sans', sans-serif" font-size="5.4" fill="#3c3c3c" textLength="7.30" lengthAdjust="spacingAndGlyphs" xml:space="preserve">File</text><text x="16.4" y="15.4" font-family="'Liberation Sans', sans-serif" font-size="5.4" fill="#3c3c3c" textLength="17.60" lengthAdjust="spacingAndGlyphs" xml:space="preserve">Analysis</text><text x="41" y="15.4" font-family="'Liberation Sans', sans-serif" font-size="5.4" fill="#3c3c3c" textLength="10.00" lengthAdjust="spacingAndGlyphs" xml:space="preserve">Tools</text><text x="57" y="15.4" font-family="'Liberation Sans', sans-serif" font-size="5.4" fill="#3c3c3c" textLength="10.00" lengthAdjust="spacingAndGlyphs" xml:space="preserve">Help</text><text x="3" y="27.0" font-family="'Liberation Sans', sans-serif" font-size="5.5" fill="#505050" textLength="24.50" lengthAdjust="spacingAndGlyphs" xml:space="preserve">vbscript.dll</text><text x="65.6" y="27.0" font-family="'Liberation Sans', sans-serif" font-size="5.5" fill="#6a6a6a" textLength="24.40" lengthAdjust="spacingAndGlyphs" xml:space="preserve">vbscript.dll</text><text x="28" y="51.7" font-family="'Liberation Sans', sans-serif" font-size="5.4" fill="#404040" textLength="30.40" lengthAdjust="spacingAndGlyphs" xml:space="preserve">A: vbscript.dll</text><text x="417.6" y="51.7" font-family="'Liberation Sans', sans-serif" font-size="5.4" fill="#404040" textLength="29.90" lengthAdjust="spacingAndGlyphs" xml:space="preserve">B: vbscript.dll</text><text x="348" y="51" font-family="'Liberation Sans', sans-serif" font-size="5.3" fill="#5aaee0" textLength="13.60" lengthAdjust="spacingAndGlyphs" xml:space="preserve">FLOW</text><text x="371" y="51" font-family="'Liberation Sans', sans-serif" font-size="5.3" fill="#4a4a4a" textLength="18.40" lengthAdjust="spacingAndGlyphs" xml:space="preserve">PSEUDO</text><text x="747" y="51" font-family="'Liberation Sans', sans-serif" font-size="5.3" fill="#5aaee0" textLength="13.60" lengthAdjust="spacingAndGlyphs" xml:space="preserve">FLOW</text><text x="770" y="51" font-family="'Liberation Sans', sans-serif" font-size="5.3" fill="#4a4a4a" textLength="18.40" lengthAdjust="spacingAndGlyphs" xml:space="preserve">PSEUDO</text><text x="33.2" y="351.9" font-family="'Liberation Sans', sans-serif" font-size="5.3" fill="#505050" textLength="23.50" lengthAdjust="spacingAndGlyphs" xml:space="preserve">Everything</text><text x="80.7" y="351.9" font-family="'Liberation Sans', sans-serif" font-size="5.3" fill="#505050" textLength="12.30" lengthAdjust="spacingAndGlyphs" xml:space="preserve">Equal</text><text x="118.4" y="351.9" font-family="'Liberation Sans', sans-serif" font-size="5.3" fill="#505050" textLength="20.00" lengthAdjust="spacingAndGlyphs" xml:space="preserve">Modified</text><text x="160" y="351.9" font-family="'Liberation Sans', sans-serif" font-size="5.3" fill="#505050" textLength="20.40" lengthAdjust="spacingAndGlyphs" xml:space="preserve">Removed</text><text x="204.4" y="351.9" font-family="'Liberation Sans', sans-serif" font-size="5.3" fill="#505050" textLength="15.00" lengthAdjust="spacingAndGlyphs" xml:space="preserve">Added</text><text x="26.7" y="361.0" font-family="'Liberation Mono', monospace" font-size="4.85" fill="#333" textLength="29.00" lengthAdjust="spacingAndGlyphs" xml:space="preserve">Difference</text><text x="131" y="361.0" font-family="'Liberation Mono', monospace" font-size="4.85" fill="#333" textLength="26.00" lengthAdjust="spacingAndGlyphs" xml:space="preserve">Item Type</text><text x="214" y="361.0" font-family="'Liberation Mono', monospace" font-size="4.85" fill="#333" textLength="26.00" lengthAdjust="spacingAndGlyphs" xml:space="preserve">Diff Type</text><text x="298" y="361.0" font-family="'Liberation Mono', monospace" font-size="4.85" fill="#333" textLength="17.50" lengthAdjust="spacingAndGlyphs" xml:space="preserve">Item A</text><text x="550" y="361.0" font-family="'Liberation Mono', monospace" font-size="4.85" fill="#333" textLength="18.00" lengthAdjust="spacingAndGlyphs" xml:space="preserve">Item B</text><polygon points="59.2,357.8 61.6,357.8 60.4,360.2" fill="#333"/><text x="349.8" y="335.3" font-family="'Liberation Mono', monospace" font-size="4.85" fill="#9a9a9a" textLength="19.70" lengthAdjust="spacingAndGlyphs" xml:space="preserve">Find...</text><text x="739" y="335.3" font-family="'Liberation Mono', monospace" font-size="4.85" fill="#9a9a9a" textLength="19.70" lengthAdjust="spacingAndGlyphs" xml:space="preserve">Find...</text><text x="773.1" y="431.4" font-family="'Liberation Sans', sans-serif" font-size="5.6" fill="#454545" textLength="24.20" lengthAdjust="spacingAndGlyphs" xml:space="preserve">1,879 items</text></svg>
<svg class="abs" style="left:0;top:0" width="800" height="434">
 <!-- app icon -->
 <circle cx="4.4" cy="4.6" r="3.7" fill="#1e9dd0"/><path d="M3.3 2.6 h2.3 v2.6 h-1.3 v2 h-1z" fill="#a8dcf0"/>
 <!-- window controls -->
 <line x1="749" x2="754.5" y1="4.4" y2="4.4" stroke="#444" stroke-width="0.5"/>
 <g stroke="#444" stroke-width="0.5" fill="none"><rect x="768.3" y="3" width="4" height="4"/><polyline points="769.3,3 769.3,2 773.3,2 773.3,6 772.3,6"/></g>
 <g stroke="#444" stroke-width="0.55"><line x1="787.3" y1="2.3" x2="791.8" y2="6.8"/><line x1="791.8" y1="2.3" x2="787.3" y2="6.8"/></g>
 <!-- tab close / plus -->
 <g stroke="#222" stroke-width="0.9"><line x1="55.4" y1="24" x2="58.2" y2="26.9"/><line x1="58.2" y1="24" x2="55.4" y2="26.9"/></g>
 <g stroke="#222" stroke-width="0.9"><line x1="117.6" y1="24" x2="120.4" y2="26.9"/><line x1="120.4" y1="24" x2="117.6" y2="26.9"/></g>
 <g stroke="#222" stroke-width="0.8"><line x1="128.3" y1="25.4" x2="131.7" y2="25.4"/><line x1="130" y1="23.7" x2="130" y2="27.1"/></g>
 <!-- header small icon -->
 <g><rect x="403.9" y="48.8" width="1.9" height="1.7" fill="#2a2a3a"/><rect x="405.9" y="50.4" width="2.1" height="1.9" fill="#9a7a78"/><rect x="404" y="50.6" width="1.7" height="1.5" fill="#e8ecf0"/></g>
 <!-- find icons -->
 <g stroke="#1a1a1a" stroke-width="0.85" fill="none"><circle cx="405.5" cy="332.7" r="1.55"/><line x1="404.4" y1="333.9" x2="402.6" y2="335.9" stroke-width="1.1"/></g>
 <g stroke="#1a1a1a" stroke-width="0.85" fill="none"><circle cx="795" cy="332.7" r="1.55"/><line x1="793.9" y1="333.9" x2="792.1" y2="335.9" stroke-width="1.1"/></g>
 <!-- scrollbars -->
 <polygon points="796.5,357 794.5,359.8 798.5,359.8" fill="#666a80"/>
 <rect x="794.4" y="360.8" width="4.2" height="3.6" fill="#7a7e90"/>
 <polygon points="796.5,414 794.5,411.2 798.5,411.2" fill="#666a80"/>
 <polyline points="28.2,419.3 27.3,420.3 28.2,421.3" fill="none" stroke="#777" stroke-width="0.5"/>
 <polyline points="788.8,419.3 789.7,420.3 788.8,421.3" fill="none" stroke="#777" stroke-width="0.5"/>
 <g stroke="#333" stroke-width="0.8"><line x1="764.3" y1="427.8" x2="767.2" y2="430.9"/><line x1="767.2" y1="427.8" x2="764.3" y2="430.9"/></g>
 <!-- sidebar icons -->
 <path d="M6.5 44.3 C8.5 41 13.5 41 15.7 44.3 C13.5 47.6 8.5 47.6 6.5 44.3z" fill="#fff" stroke="#2e2e2e" stroke-width="0.95"/>
 <circle cx="11" cy="44.2" r="1.9" fill="#1a1a1a"/>
 <g fill="#1e1e1e">
  <circle cx="9.4" cy="61.3" r="0.95"/><rect x="6.8" y="62.7" width="4.8" height="2.1"/>
  <rect x="6.8" y="62.7" width="1.7" height="4.9"/><rect x="9.9" y="62.7" width="1.7" height="4.9"/>
  <rect x="11.5" y="65.1" width="2.4" height="1.2"/><circle cx="14" cy="65.7" r="0.85"/>
 </g>
 <g fill="#222" stroke="#222" stroke-width="0.6">
  <circle cx="11.3" cy="83.4" r="1.1"/><polyline points="8,88.6 11.3,83.4 14.6,88.6" fill="none"/><line x1="11.3" y1="83.4" x2="11.3" y2="88.6"/>
  <circle cx="7.9" cy="88.9" r="1.2" stroke="none"/><circle cx="11.3" cy="88.9" r="1.2" stroke="none"/><circle cx="14.7" cy="88.9" r="1.2" stroke="none"/>
 </g>
 <g fill="none" stroke="#1f9ed3" stroke-width="1.25" stroke-linecap="round">
  <path d="M7.2 104 C9.6 104 9.8 104.4 10.8 106.2 C11.8 108 12.4 108.5 14.8 108.5"/><path d="M7.2 108.5 C9.6 108.5 9.8 108 10.8 106.2 C11.8 104.4 12.4 104 14.8 104"/>
 </g>
 <g fill="#1f9ed3"><polygon points="14,102.6 16,104 14,105.4"/><polygon points="14,107.1 16,108.5 14,109.9"/></g>
 <line x1="6.5" y1="123.3" x2="18" y2="123.3" stroke="#999" stroke-width="0.6"/>
 <g><polygon points="11.80,133.20 14.14,134.55 14.14,137.25 11.80,138.60 9.46,137.25 9.46,134.55" fill="#1e1e1e" stroke="#f5f5f5" stroke-width="0.35"/><polyline points="9.46,134.55 11.80,135.90 14.14,134.55" fill="none" stroke="#cfd8dc" stroke-width="0.5"/><line x1="11.80" y1="135.90" x2="11.80" y2="138.60" stroke="#cfd8dc" stroke-width="0.5"/><polygon points="9.10,137.60 11.44,138.95 11.44,141.65 9.10,143.00 6.76,141.65 6.76,138.95" fill="#1e1e1e" stroke="#f5f5f5" stroke-width="0.35"/><polyline points="6.76,138.95 9.10,140.30 11.44,138.95" fill="none" stroke="#cfd8dc" stroke-width="0.5"/><line x1="9.10" y1="140.30" x2="9.10" y2="143.00" stroke="#cfd8dc" stroke-width="0.5"/><polygon points="14.50,137.60 16.84,138.95 16.84,141.65 14.50,143.00 12.16,141.65 12.16,138.95" fill="#1e1e1e" stroke="#f5f5f5" stroke-width="0.35"/><polyline points="12.16,138.95 14.50,140.30 16.84,138.95" fill="none" stroke="#cfd8dc" stroke-width="0.5"/><line x1="14.50" y1="140.30" x2="14.50" y2="143.00" stroke="#cfd8dc" stroke-width="0.5"/></g>
 <g fill="none" stroke="#3a3a3a" stroke-width="0.9">
  <polyline points="12.3,155.6 7.3,155.6 7.3,161.6 13.5,161.6 13.5,159.5"/>
  <line x1="10.3" y1="160" x2="15" y2="156" stroke="#222" stroke-width="1.4"/>
 </g>
 <g stroke="#333" stroke-width="0.7">
  <line x1="6.7" y1="423.3" x2="13.9" y2="423.3"/><line x1="6.7" y1="425.6" x2="13.9" y2="425.6"/><line x1="6.7" y1="428" x2="13.9" y2="428"/>
 </g>
 <g fill="#222"><circle cx="8.9" cy="423.3" r="0.95"/><circle cx="11.7" cy="425.6" r="0.95"/><circle cx="9.4" cy="428" r="0.95"/></g>
</svg>
</body></html>
